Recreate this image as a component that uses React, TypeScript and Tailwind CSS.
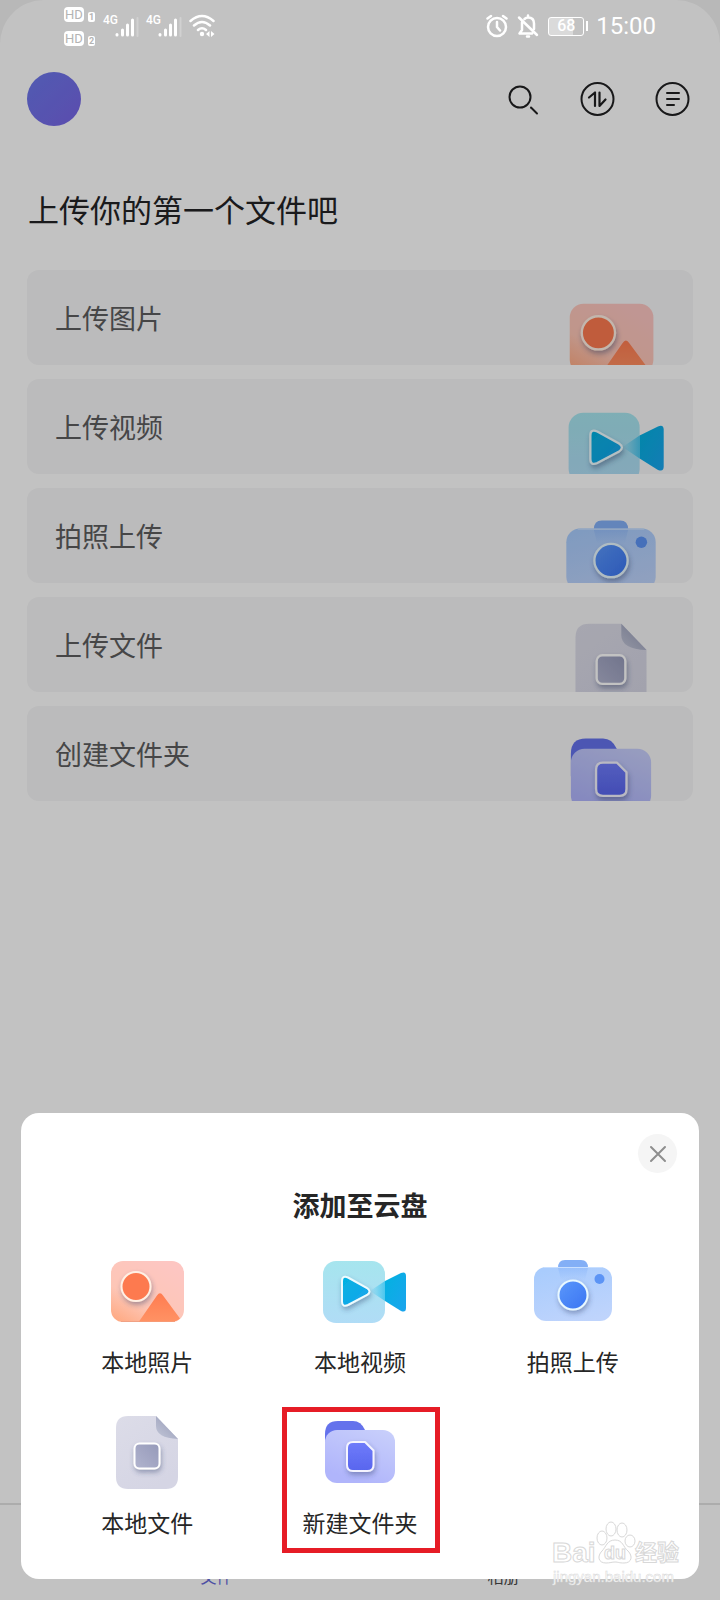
import React from "react";

const icons = {
  photo: PhotoIcon,
  video: VideoIcon,
  camera: CameraIcon,
  file: FileIcon,
  folder: FolderIcon,
};

type IconName = keyof typeof icons;

const uploads: { label: string; icon: IconName }[] = [
  { label: "上传图片", icon: "photo" },
  { label: "上传视频", icon: "video" },
  { label: "拍照上传", icon: "camera" },
  { label: "上传文件", icon: "file" },
  { label: "创建文件夹", icon: "folder" },
];

const actions: { label: string; icon: IconName; marked?: boolean }[] = [
  { label: "本地照片", icon: "photo" },
  { label: "本地视频", icon: "video" },
  { label: "拍照上传", icon: "camera" },
  { label: "本地文件", icon: "file" },
  { label: "新建文件夹", icon: "folder", marked: true },
];

// Gradients shared by the icons, both in the list and in the sheet
function IconDefs() {
  return (
    <svg className="absolute h-0 w-0" aria-hidden="true">
      <defs>
        <linearGradient id="photo-body" x1="0" y1="1" x2="0.7" y2="0">
          <stop offset="0" stopColor="#ffa67c" />
          <stop offset="0.4" stopColor="#fdc6b6" />
          <stop offset="1" stopColor="#fdc6c2" />
        </linearGradient>
        <linearGradient id="photo-hill" x1="0" y1="0" x2="0" y2="1">
          <stop offset="0" stopColor="#ff7c50" />
          <stop offset="1" stopColor="#ff9264" />
        </linearGradient>
        <linearGradient id="video-body" x1="0" y1="0" x2="0" y2="1">
          <stop offset="0" stopColor="#a6e5ee" />
          <stop offset="1" stopColor="#b0dcf6" />
        </linearGradient>
        <linearGradient id="video-glow" x1="0" y1="0" x2="1" y2="0">
          <stop offset="0" stopColor="#4cc7ee" stopOpacity="0" />
          <stop offset="1" stopColor="#4cc7ee" />
        </linearGradient>
        <linearGradient id="video-play" x1="0" y1="0" x2="1" y2="1">
          <stop offset="0" stopColor="#02b2e0" />
          <stop offset="1" stopColor="#1ba4ee" />
        </linearGradient>
        <linearGradient id="camera-body" x1="0.3" y1="0" x2="0.7" y2="1">
          <stop offset="0" stopColor="#a9ccfd" />
          <stop offset="1" stopColor="#bfd4fc" />
        </linearGradient>
        <linearGradient id="camera-glow" x1="0" y1="0" x2="0" y2="1">
          <stop offset="0" stopColor="#7fadf8" />
          <stop offset="1" stopColor="#7fadf8" stopOpacity="0" />
        </linearGradient>
        <linearGradient id="camera-lens" x1="0" y1="0" x2="1" y2="1">
          <stop offset="0" stopColor="#5b98fb" />
          <stop offset="1" stopColor="#3a74f2" />
        </linearGradient>
        <linearGradient id="file-body" x1="0" y1="0" x2="0.6" y2="1">
          <stop offset="0" stopColor="#dcdce8" />
          <stop offset="1" stopColor="#d5d5e4" />
        </linearGradient>
        <linearGradient id="file-fold" x1="0.8" y1="0.2" x2="0.2" y2="0.9">
          <stop offset="0" stopColor="#9ba0bb" />
          <stop offset="1" stopColor="#bcc0d3" />
        </linearGradient>
        <linearGradient id="file-mark" x1="0" y1="1" x2="1" y2="0">
          <stop offset="0" stopColor="#b1b4ce" />
          <stop offset="1" stopColor="#9599b9" />
        </linearGradient>
        <linearGradient id="folder-body" x1="1" y1="0" x2="0.5" y2="1">
          <stop offset="0" stopColor="#c9d0fb" />
          <stop offset="1" stopColor="#b0b5fb" />
        </linearGradient>
        <linearGradient id="folder-mark" x1="0" y1="0" x2="0" y2="1">
          <stop offset="0" stopColor="#6f7cfa" />
          <stop offset="1" stopColor="#5865ee" />
        </linearGradient>
        <filter id="drop" x="-40%" y="-40%" width="190%" height="190%">
          <feDropShadow dx="1" dy="3" stdDeviation="2.5" floodColor="#30406a" floodOpacity="0.4" />
        </filter>
      </defs>
    </svg>
  );
}

function PhotoIcon({ className }: { className: string }) {
  return (
    <svg viewBox="0 0 96 96" className={className} aria-hidden="true">
      <rect x="12" y="18" width="73" height="61" rx="12" fill="url(#photo-body)" />
      <path d="M22 78.5h54" stroke="#f1a285" strokeWidth="1" />
      <path d="M40 78.5 58 52.5q3-4.5 6 0L81 75.5q-3 3-8 3z" fill="url(#photo-hill)" />
      <circle cx="37" cy="43.5" r="14.5" fill="#fd7a50" stroke="#fff0e4" strokeWidth="2" filter="url(#drop)" />
    </svg>
  );
}

function VideoIcon({ className }: { className: string }) {
  return (
    <svg viewBox="0 0 96 96" className={className} aria-hidden="true">
      <rect x="11" y="18" width="62" height="62" rx="13" fill="url(#video-body)" />
      <path d="M58 48 73 38v20z" fill="url(#video-glow)" />
      <path d="M73 38 89 30q5-2 5 3v32q0 5-5 3L73 58z" fill="url(#video-play)" />
      <path
        d="M30 38q0-6 6-3.5L55 45q5 3.5 0 7L36 62q-6 2.5-6-3.5z"
        fill="url(#video-play)"
        stroke="#eefbff"
        strokeWidth="2"
        filter="url(#drop)"
      />
    </svg>
  );
}

function CameraIcon({ className }: { className: string }) {
  return (
    <svg viewBox="0 0 96 96" className={className} aria-hidden="true">
      <path d="M33 25q0-8 7-8h16q7 0 7 8z" fill="#83aff6" />
      <rect x="9" y="24" width="78" height="54" rx="12" fill="url(#camera-body)" />
      <path d="M33 25h30l-3 12H36z" fill="url(#camera-glow)" opacity="0.4" />
      <path d="M19 24.5h58" stroke="#c8dfff" strokeWidth="1" />
      <circle cx="74.5" cy="36" r="5" fill="#5c94f5" />
      <circle cx="48" cy="52" r="14.5" fill="url(#camera-lens)" stroke="#e8f8ff" strokeWidth="2" filter="url(#drop)" />
    </svg>
  );
}

function FileIcon({ className }: { className: string }) {
  return (
    <svg viewBox="0 0 96 96" className={className} aria-hidden="true">
      <path d="M29 12h28l22 23v38q0 12-12 12H29q-12 0-12-12V24q0-12 12-12z" fill="url(#file-body)" />
      <path d="M57 12 79 35q-22-1-22-13z" fill="url(#file-fold)" />
      <rect
        x="35.5"
        y="39.5"
        width="25"
        height="25"
        rx="5"
        fill="url(#file-mark)"
        stroke="#fff"
        strokeWidth="2"
        filter="url(#drop)"
      />
    </svg>
  );
}

function FolderIcon({ className }: { className: string }) {
  return (
    <svg viewBox="0 0 96 96" className={className} aria-hidden="true">
      <path d="M13 50V30q0-13 13-13h15q8 0 12 9l2 8z" fill="#6472ec" />
      <rect x="13" y="26" width="70" height="53" rx="12" fill="url(#folder-body)" />
      <path
        d="M41 38h12l8.5 8.5V61q0 6-6 6H41q-6 0-6-6V44q0-6 6-6z"
        fill="url(#folder-mark)"
        stroke="#f4f4ff"
        strokeWidth="2"
        strokeLinejoin="round"
        filter="url(#drop)"
      />
    </svg>
  );
}

function HdBadge({ sim }: { sim: string }) {
  return (
    <div className="flex items-end gap-1 text-[#b4b4b4]">
      <span className="flex h-[15px] w-5 items-center justify-center rounded-sm bg-white text-[13px] leading-none">
        HD
      </span>
      <span className="flex h-[10px] w-[7px] items-center justify-center rounded-[2px] bg-white text-[9px] leading-none font-bold">
        {sim}
      </span>
    </div>
  );
}

function Signal() {
  return (
    <div className="flex text-white">
      <span className="mt-[13px] w-3 text-[12px] leading-[14px] font-medium">4G</span>
      <svg viewBox="0 0 24 24" className="mt-4 h-6 w-6" fill="none" stroke="currentColor" strokeWidth="3" strokeLinecap="round">
        <path d="M2 18.5v.5M7.5 14v5M12.5 9v10M17.5 4v15" />
        <path d="M22.5 2v18" strokeWidth="2" opacity="0.25" />
      </svg>
    </div>
  );
}

function StatusBar() {
  return (
    <div className="relative z-10 flex h-[54px] items-start justify-between pr-16 pl-16 font-[Roboto,sans-serif] text-white">
      <div className="flex items-start">
        <div className="mt-[7px] flex flex-col gap-[9px]">
          <HdBadge sim="1" />
          <HdBadge sim="2" />
        </div>
        <div className="ml-2 flex gap-[7px]">
          <Signal />
          <Signal />
        </div>
        <svg
          viewBox="0 0 26 24"
          className="mt-[14px] ml-[7px] h-6 w-[26px]"
          fill="none"
          stroke="currentColor"
          strokeWidth="2.5"
          strokeLinecap="round"
        >
          <path d="M1.5 7q11.5-10 23 0M5 11.5q8-7 16 0M9 16q4-3.5 8 0" />
          <circle cx="13" cy="20" r="2.2" fill="currentColor" stroke="none" />
          <path d="m20.5 17-3.5 3 3.5 3zM22 17l3.5 3-3.5 3z" fill="currentColor" stroke="none" />
        </svg>
      </div>
      <div className="mt-[14px] flex h-6 items-center">
        <svg viewBox="0 0 22 24" className="h-6 w-[22px]" fill="none" stroke="currentColor" strokeWidth="2.5" strokeLinecap="round">
          <circle cx="11" cy="13" r="9" />
          <path d="M11 8v5l3 3.5M1.500 4.500l3.500-2.500M20.500 4.500l-3.500-2.500" />
        </svg>
        <svg
          viewBox="0 0 22 24"
          className="ml-[9px] h-6 w-[22px]"
          fill="none"
          stroke="currentColor"
          strokeWidth="2.5"
          strokeLinecap="round"
          strokeLinejoin="round"
        >
          <path d="M2 3.5 20 21M5 8.5V16l-2.5 3.500H15M7.500 5Q9 3.500 11 3.500q6 0 6 6V15M11 1.500v2M10 22.500h2" />
        </svg>
        <div className="ml-[9px] flex items-center gap-[2px]">
          <span className="flex h-[19px] w-9 items-center justify-center rounded-[3px] border border-white bg-linear-to-r from-white/40 from-70% to-transparent to-70% text-[16px] leading-none font-medium">
            68
          </span>
          <span className="h-[10px] w-[2px] bg-white" />
        </div>
        <span className="ml-2 text-[24px] leading-6">15:00</span>
      </div>
    </div>
  );
}

function Header() {
  return (
    <header className="flex items-center justify-between pt-[18px] pr-[30px] pl-[27px]">
      <button aria-label="个人中心" className="size-[54px] rounded-full bg-linear-to-br from-[#6a78ea] to-[#7865e6]" />
      <div className="flex gap-[39px] text-[#202022]">
        <button aria-label="搜索">
          <svg viewBox="0 0 36 36" className="size-9" fill="none" stroke="currentColor" strokeWidth="2" strokeLinecap="round">
            <circle cx="16" cy="16" r="10.5" />
            <path d="m27 26.500 6 6" />
          </svg>
        </button>
        <button aria-label="传输列表">
          <svg
            viewBox="0 0 36 36"
            className="size-9"
            fill="none"
            stroke="currentColor"
            strokeWidth="2"
            strokeLinecap="round"
            strokeLinejoin="round"
          >
            <circle cx="18.5" cy="18" r="16" />
            <path d="M10 16.500 16 11.500V25M20.500 11.500V25l6-6.500" strokeWidth="2.200" />
          </svg>
        </button>
        <button aria-label="菜单">
          <svg viewBox="0 0 36 36" className="size-9" fill="none" stroke="currentColor" strokeWidth="2" strokeLinecap="round">
            <circle cx="18.5" cy="18" r="16" />
            <path d="M13 12h12M13 18h12M13 24h7" />
          </svg>
        </button>
      </div>
    </header>
  );
}

function Watermark() {
  return (
    <svg
      viewBox="0 0 136 64"
      className="absolute right-[18px] -bottom-1 h-16 w-[136px] overflow-visible font-['Liberation_Sans','Noto_Sans_CJK_SC',sans-serif]"
      fill="#ffffff"
      stroke="#d8d8d8"
      strokeWidth="1"
      aria-hidden="true"
    >
      <text x="7" y="43" fontSize="28" fontWeight="700">Bai</text>
      <ellipse cx="57" cy="19" rx="5" ry="7" />
      <ellipse cx="66" cy="10" rx="5" ry="7" />
      <ellipse cx="77" cy="11" rx="5" ry="7" />
      <ellipse cx="85" cy="22" rx="5" ry="6" />
      <path d="M70 21c8 0 8 7 13 11 5 5 4 12-4 12-5 0-6-1-9-1s-5 1-9 1c-8 0-9-7-4-12 4-4 5-11 13-11z" />
      <text x="59" y="40" fontSize="18" fontWeight="700">du</text>
      <text x="90" y="41" fontSize="22" fontWeight="700">经验</text>
      <text x="8" y="63" fontSize="15" strokeWidth="0.5">jingyan.baidu.com</text>
    </svg>
  );
}

function AddSheet() {
  return (
    <section
      role="dialog"
      aria-labelledby="sheet-title"
      className="absolute inset-x-[21px] bottom-[21px] rounded-[18px] bg-white px-5 pb-[41px] text-[#262626]"
    >
      <div className="flex justify-end pt-[21px] pr-0.5">
        <button aria-label="关闭" className="flex size-[39px] items-center justify-center rounded-full bg-[#f5f5f5]">
          <svg viewBox="0 0 18 18" className="size-[18px]" stroke="#8e8e8e" strokeWidth="2" strokeLinecap="round">
            <path d="m2 2 14 14M16 2 2 16" />
          </svg>
        </button>
      </div>
      <h2 id="sheet-title" className="mt-3 text-center text-[27px] leading-10 font-bold">
        添加至云盘
      </h2>
      <div className="mt-[18px] grid grid-cols-3 gap-y-[27px]">
        {actions.map(({ label, icon, marked }) => {
          const Icon = icons[icon];
          return (
            <button key={label} className="relative flex flex-col items-center">
              <Icon className="size-24" />
              <span className="mt-[6px] text-[23px] leading-8">{label}</span>
              {marked && <span className="absolute -bottom-[15px] right-[26px] left-7 h-[146px] border-[5px] border-[#e61c26]" />}
            </button>
          );
        })}
      </div>
      <Watermark />
    </section>
  );
}

export default function App() {
  return (
    <div className="relative flex min-h-screen flex-col bg-[#f2f2f2] font-['Noto_Sans_CJK_SC',sans-serif]">
      <IconDefs />
      <div className="flex grow flex-col rounded-t-[44px] bg-white">
        <StatusBar />
        <Header />
        <main className="grow px-[27px] pb-4">
          <h1 className="mt-[61px] pl-px text-[31px] leading-[44px] text-[#232325]">上传你的第一个文件吧</h1>
          <ul className="mt-[39px] flex flex-col gap-[14px]">
            {uploads.map(({ label, icon }) => {
              const Icon = icons[icon];
              return (
                <li key={label}>
                  <button className="flex h-[95px] w-full items-start justify-between overflow-hidden rounded-xl bg-[#f6f6f7] pr-[27px] pl-7 text-[#5c5c5e]">
                    <span className="self-center text-[27px] leading-10">{label}</span>
                    <Icon className="mt-[13px] size-[110px]" />
                  </button>
                </li>
              );
            })}
          </ul>
        </main>
        <nav className="flex h-[97px] items-end border-t-2 border-[#e2e2e2] px-[73px] pb-3 text-[16px] leading-6">
          <a href="#files" className="flex-1 text-center text-[#6468d8]">文件</a>
          <a href="#album" className="flex-1 text-center text-[#4a4a4a]">相册</a>
        </nav>
      </div>
      <div className="absolute inset-0 bg-black/24" />
      <AddSheet />
    </div>
  );
}
